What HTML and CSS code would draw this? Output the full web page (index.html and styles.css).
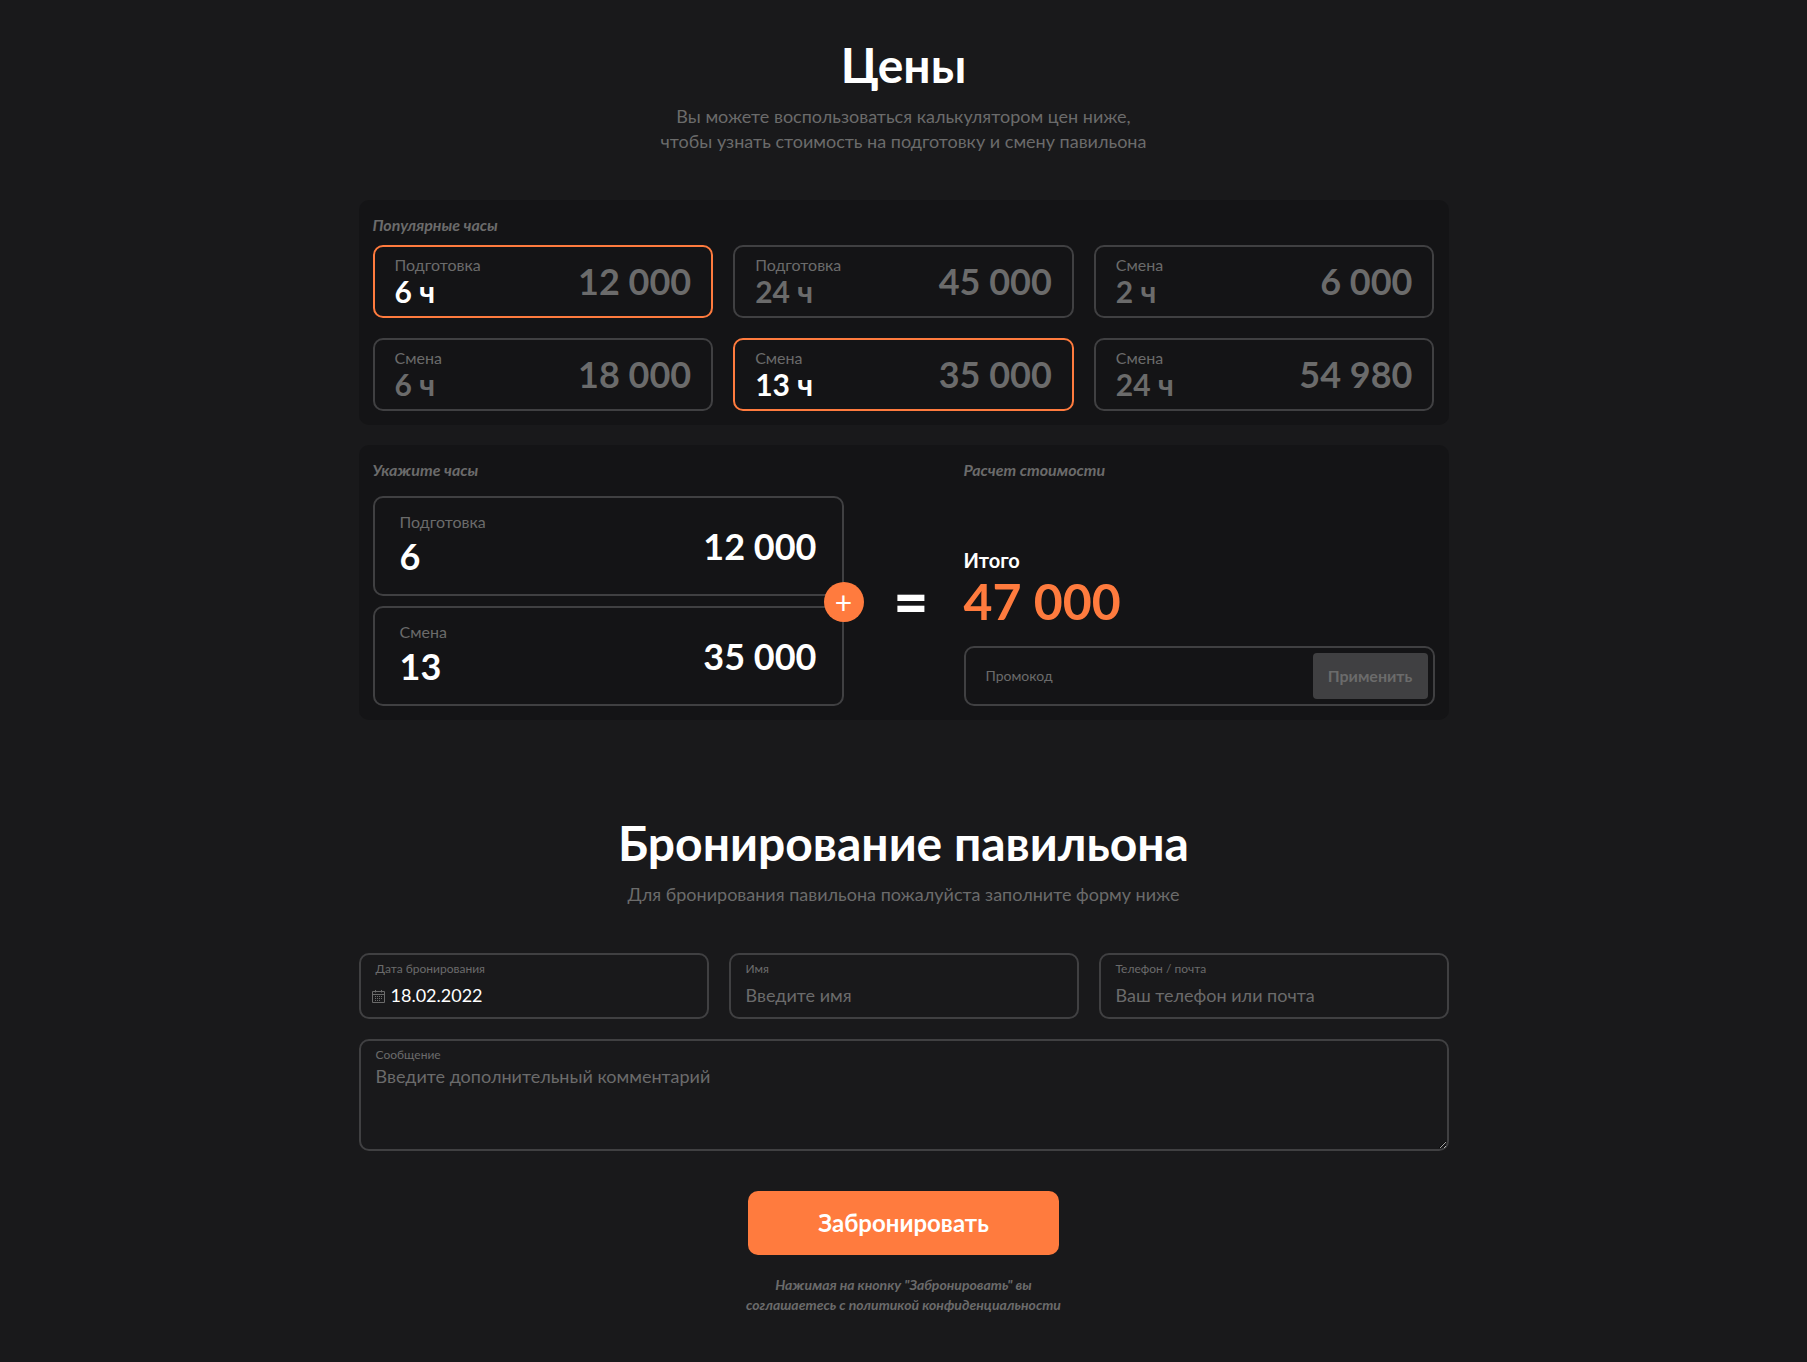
FILE: index.html
```html
<!DOCTYPE html>
<html lang="ru">
<head>
<meta charset="utf-8">
<meta name="viewport" content="width=device-width, initial-scale=1">
<title>Цены и бронирование</title>
<link rel="stylesheet" href="styles.css">
</head>
<body>
<main class="page">
  <section class="section">
    <h2 class="title">Цены</h2>
    <p class="subtitle">Вы можете воспользоваться калькулятором цен ниже,<br>чтобы узнать стоимость на подготовку и смену павильона</p>

    <div class="panel">
      <h3 class="caption">Популярные часы</h3>
      <div class="presets">
        <button type="button" class="preset preset-active"><span class="preset-info"><span class="label">Подготовка</span><span class="hours">6 ч</span></span><span class="price">12 000</span></button>
        <button type="button" class="preset"><span class="preset-info"><span class="label">Подготовка</span><span class="hours">24 ч</span></span><span class="price">45 000</span></button>
        <button type="button" class="preset"><span class="preset-info"><span class="label">Смена</span><span class="hours">2 ч</span></span><span class="price">6 000</span></button>
        <button type="button" class="preset"><span class="preset-info"><span class="label">Смена</span><span class="hours">6 ч</span></span><span class="price">18 000</span></button>
        <button type="button" class="preset preset-active"><span class="preset-info"><span class="label">Смена</span><span class="hours">13 ч</span></span><span class="price">35 000</span></button>
        <button type="button" class="preset"><span class="preset-info"><span class="label">Смена</span><span class="hours">24 ч</span></span><span class="price">54 980</span></button>
      </div>
    </div>

    <div class="panel calc">
      <div class="calc-hours">
        <h3 class="caption">Укажите часы</h3>
        <div class="counters">
          <div class="counter">
            <div class="counter-info">
              <label class="label" for="prep">Подготовка</label>
              <input class="counter-input" id="prep" type="text" inputmode="numeric" value="6">
            </div>
            <output class="price price-bright" for="prep">12 000</output>
          </div>
          <div class="counter">
            <div class="counter-info">
              <label class="label" for="shift">Смена</label>
              <input class="counter-input" id="shift" type="text" inputmode="numeric" value="13">
            </div>
            <output class="price price-bright" for="shift">35 000</output>
          </div>
          <span class="plus">+</span>
        </div>
      </div>
      <div class="equals">=</div>
      <div class="calc-total">
        <h3 class="caption">Расчет стоимости</h3>
        <div class="total">
          <span class="total-label">Итого</span>
          <output class="total-sum" for="prep shift">47 000</output>
        </div>
        <form class="promo">
          <input class="promo-input" type="text" placeholder="Промокод" aria-label="Промокод">
          <button class="promo-button" type="button">Применить</button>
        </form>
      </div>
    </div>
  </section>

  <section class="section">
    <h2 class="title">Бронирование павильона</h2>
    <p class="subtitle">Для бронирования павильона пожалуйста заполните форму ниже</p>

    <form class="booking">
      <div class="field">
        <label class="field-label" for="date">Дата бронирования</label>
        <div class="date-row">
          <svg class="calendar" viewBox="0 0 13 13" aria-hidden="true">
            <path d="M.5 1.5h12v11H.5zM.5 4.500h12M3.500 0v2.500M9.500 0v2.500" fill="none" stroke="currentColor"/>
            <path d="M3 6.500h8M3 8.500h8M3 10.500h6" fill="none" stroke="currentColor" stroke-dasharray="1 1"/>
          </svg>
          <input class="field-input date-input" id="date" type="text" value="18.02.2022">
        </div>
      </div>
      <div class="field">
        <label class="field-label" for="name">Имя</label>
        <input class="field-input" id="name" type="text" placeholder="Введите имя">
      </div>
      <div class="field">
        <label class="field-label" for="contact">Телефон / почта</label>
        <input class="field-input" id="contact" type="text" placeholder="Ваш телефон или почта">
      </div>
      <div class="message">
        <label class="field-label message-label" for="message">Сообщение</label>
        <textarea class="message-input" id="message" placeholder="Введите дополнительный комментарий"></textarea>
      </div>
      <button class="submit" type="button">Забронировать</button>
      <p class="note">Нажимая на кнопку "Забронировать" вы<br>соглашаетесь с политикой конфиденциальности</p>
    </form>
  </section>
</main>
</body>
</html>
```
FILE: styles.css
```css
:root {
  --bg: #19191b;
  --panel: #141416;
  --line: #404042;
  --muted: #6b6b6b;
  --accent: #ff7b3e;
}

* {
  box-sizing: border-box;
}

body {
  margin: 0;
  background: var(--bg);
  color: #fff;
  font-family: Lato, "Open Sans", sans-serif;
  font-size: 16px;
  line-height: 20px;
}

button,
input,
textarea {
  font: inherit;
  color: inherit;
}

input,
textarea {
  min-width: 0;
  padding: 0;
  border: 0;
  outline: 0;
  background: transparent;
}

::placeholder {
  color: var(--muted);
  opacity: 1;
}

.page {
  max-width: 1120px;
  margin: 0 auto;
  padding: 36px 15px 48px;
}

.section + .section {
  margin-top: 94px;
}

.title {
  margin: 0 0 10px;
  font-size: 48px;
  line-height: 58px;
  font-weight: 700;
  text-align: center;
}

.subtitle {
  margin: 0 0 46px;
  color: var(--muted);
  font-size: 18px;
  line-height: 25px;
  text-align: center;
}

.panel {
  padding: 15px 14px 14px;
  border-radius: 10px;
  background: var(--panel);
}

.panel + .panel {
  margin-top: 20px;
}

.caption {
  margin: 0 0 10px;
  color: var(--muted);
  font-size: 16px;
  line-height: 20px;
  font-weight: 700;
  font-style: italic;
}

.presets {
  display: grid;
  grid-template-columns: repeat(3, 1fr);
  gap: 20px;
}

.preset {
  display: flex;
  align-items: center;
  justify-content: space-between;
  padding: 8px 20px;
  border: 2px solid var(--line);
  border-radius: 10px;
  background: transparent;
  color: var(--muted);
  text-align: left;
}

.preset-active {
  border-color: var(--accent);
}

.preset-active .hours {
  color: #fff;
}

.preset-info {
  display: flex;
  flex-direction: column;
}

.label {
  color: var(--muted);
  font-size: 16px;
  line-height: 19px;
}

.hours {
  font-size: 30px;
  line-height: 34px;
  font-weight: 700;
}

.price {
  font-size: 36px;
  line-height: 43px;
  font-weight: 700;
}

.price-bright {
  color: #fff;
}

.calc {
  display: grid;
  grid-template-columns: 1fr 120px 1fr;
}

.calc .caption {
  margin-bottom: 16px;
}

.counters {
  position: relative;
  display: flex;
  flex-direction: column;
  gap: 10px;
}

.counter {
  display: flex;
  align-items: center;
  justify-content: space-between;
  padding: 14px 25px;
  border: 2px solid var(--line);
  border-radius: 10px;
}

.counter-info {
  display: flex;
  flex: 1;
  flex-direction: column;
  gap: 3px;
  padding-bottom: 3px;
}

.counter-input {
  width: 100%;
  height: 43px;
  font-size: 36px;
  font-weight: 700;
}

.plus {
  position: absolute;
  top: 50%;
  right: -20px;
  display: flex;
  align-items: center;
  justify-content: center;
  width: 40px;
  height: 40px;
  margin-top: -19px;
  border-radius: 50%;
  background: var(--accent);
  font-size: 30px;
}

.equals {
  align-self: end;
  padding-bottom: 75px;
  padding-left: 15px;
  font-size: 60px;
  line-height: 60px;
  font-weight: 900;
  text-align: center;
}

.calc-total {
  display: flex;
  flex-direction: column;
  justify-content: space-between;
}

.total {
  display: flex;
  flex-direction: column;
  margin-top: auto;
  margin-bottom: 16px;
}

.total-label {
  font-size: 20px;
  line-height: 24px;
  font-weight: 700;
}

.total-sum {
  color: var(--accent);
  font-size: 50px;
  line-height: 58px;
  font-weight: 700;
}

.promo {
  display: flex;
  height: 60px;
  padding: 5px;
  border: 2px solid var(--line);
  border-radius: 10px;
}

.promo-input {
  flex: 1;
  padding-left: 15px;
  font-size: 14px;
}

.promo-button {
  width: 115px;
  padding: 0;
  border: 0;
  border-radius: 4px;
  background: var(--line);
  color: var(--muted);
  font-size: 16px;
  font-weight: 700;
}

.booking {
  display: grid;
  grid-template-columns: repeat(3, 1fr);
  gap: 20px;
}

.field {
  display: flex;
  flex-direction: column;
  padding: 6px 15px 8px;
  border: 2px solid var(--line);
  border-radius: 10px;
}

.field-label {
  color: var(--muted);
  font-size: 12px;
  line-height: 16px;
}

.field-input {
  height: 32px;
  padding-top: 4px;
  font-size: 18px;
}

.date-row {
  display: flex;
  align-items: center;
  gap: 6px;
  margin-left: -4px;
}

.date-input {
  flex: 1;
}

.calendar {
  width: 13px;
  height: 13px;
  margin-top: 7px;
  color: var(--muted);
}

.message {
  position: relative;
  grid-column: 1 / -1;
}

.message-label {
  position: absolute;
  top: 8px;
  left: 17px;
}

.message-input {
  display: block;
  width: 100%;
  height: 112px;
  padding: 24px 15px 8px;
  border: 2px solid var(--line);
  border-radius: 10px;
  font-size: 18px;
  line-height: 22px;
  resize: vertical;
}

.submit {
  grid-column: 1 / -1;
  justify-self: center;
  width: 311px;
  max-width: 100%;
  height: 64px;
  margin-top: 20px;
  border: 0;
  border-radius: 10px;
  background: var(--accent);
  font-size: 24px;
  font-weight: 700;
}

.note {
  grid-column: 1 / -1;
  margin: 0;
  color: var(--muted);
  font-size: 14px;
  line-height: 20px;
  font-weight: 700;
  font-style: italic;
  text-align: center;
}

@media (max-width: 900px) {
  .presets,
  .calc,
  .booking {
    grid-template-columns: 1fr;
  }

  .equals {
    padding: 0;
  }
}
```
